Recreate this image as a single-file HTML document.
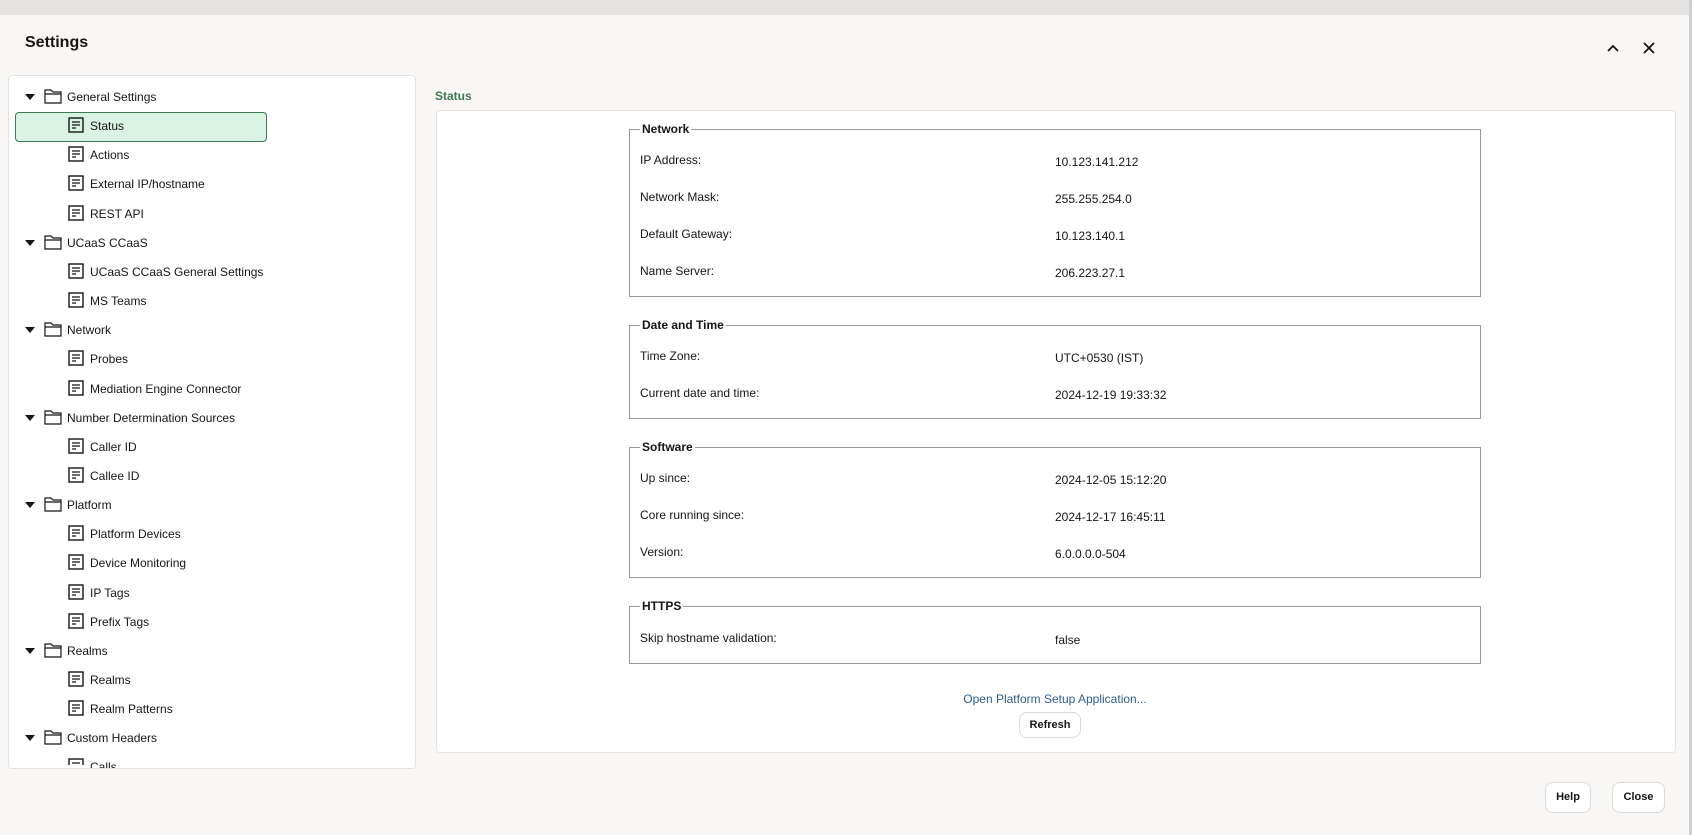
<!DOCTYPE html>
<html><head><meta charset="utf-8"><style>
*{margin:0;padding:0;box-sizing:border-box}
body{width:1692px;height:835px;overflow:hidden;background:#f8f7f5;font-family:"Liberation Sans",sans-serif;color:#161513;position:relative}
.top{position:absolute;left:0;top:0;width:1692px;height:15px;background:#e4e3e1}
.rs{position:absolute;left:1689px;top:0;width:3px;height:835px;background:#cfcfcf}
.title{position:absolute;left:25px;top:34px;font-size:16px;font-weight:bold}
.left{position:absolute;left:8px;top:75px;width:408px;height:694px;background:#fff;border:1px solid #e4e2df;border-radius:4px;overflow:hidden}
.row{position:absolute;font-size:12px;height:20px;line-height:20px;white-space:nowrap}
.sel{position:absolute;left:6px;top:36px;width:252px;height:30px;background:#d9f4e5;border:1px solid #3b7a52;border-radius:4px}
.caret{position:absolute;width:0;height:0;border-left:5px solid transparent;border-right:5px solid transparent;border-top:6px solid #161513}
svg{position:absolute}
.stat{position:absolute;left:435px;top:89px;font-size:12px;font-weight:bold;color:#3b7a52}
.box{position:absolute;left:436px;top:110px;width:1240px;height:643px;background:#fff;border:1px solid #e4e2df;border-radius:4px}
fieldset{position:absolute;left:629px;width:852px;border:1px solid #9a9a9a;font-size:12px}
legend{font-weight:bold;font-size:12px;margin-left:10px;padding:0 2px}
.l{position:absolute;left:640px;font-size:12px}
.v{position:absolute;left:1055px;font-size:12px}
.btn{position:absolute;background:#fff;border:1px solid #dcdad6;border-radius:8px;font-size:11px;font-weight:bold;text-align:center}
</style></head><body>
<div class="top"></div><div class="rs"></div>
<div class="title">Settings</div>
<svg style="left:1606px;top:42px" width="14" height="12" viewBox="0 0 14 12"><path d="M2 9 L7 4 L12 9" fill="none" stroke="#161513" stroke-width="1.8"/></svg>
<svg style="left:1642px;top:41px" width="14" height="14" viewBox="0 0 14 14"><path d="M2 2L12 12M12 2L2 12" stroke="#161513" stroke-width="1.8"/></svg>
<div class="left">
<div class="sel"></div>
</div>
<div id="tree"></div>
<div class="stat">Status</div>
<div class="box"></div>
<fieldset style="top:122px;height:175px"><legend>Network</legend></fieldset>
<div class="l" style="top:153px">IP Address:</div><div class="v" style="top:155px">10.123.141.212</div>
<div class="l" style="top:190px">Network Mask:</div><div class="v" style="top:192px">255.255.254.0</div>
<div class="l" style="top:227px">Default Gateway:</div><div class="v" style="top:229px">10.123.140.1</div>
<div class="l" style="top:264px">Name Server:</div><div class="v" style="top:266px">206.223.27.1</div>
<fieldset style="top:318px;height:101px"><legend>Date and Time</legend></fieldset>
<div class="l" style="top:349px">Time Zone:</div><div class="v" style="top:351px">UTC+0530 (IST)</div>
<div class="l" style="top:386px">Current date and time:</div><div class="v" style="top:388px">2024-12-19 19:33:32</div>
<fieldset style="top:440px;height:138px"><legend>Software</legend></fieldset>
<div class="l" style="top:471px">Up since:</div><div class="v" style="top:473px">2024-12-05 15:12:20</div>
<div class="l" style="top:508px">Core running since:</div><div class="v" style="top:510px">2024-12-17 16:45:11</div>
<div class="l" style="top:545px">Version:</div><div class="v" style="top:547px">6.0.0.0.0-504</div>
<fieldset style="top:599px;height:65px"><legend>HTTPS</legend></fieldset>
<div class="l" style="top:631px">Skip hostname validation:</div><div class="v" style="top:633px">false</div>
<div style="position:absolute;left:900px;width:310px;text-align:center;top:692px;font-size:12px;color:#2f5f8a">Open Platform Setup Application...</div>
<div class="btn" style="left:1019px;top:712px;width:62px;height:26px;line-height:24px">Refresh</div>
<div class="btn" style="left:1545px;top:782px;width:46px;height:31px;line-height:29px">Help</div>
<div class="btn" style="left:1612px;top:782px;width:53px;height:31px;line-height:29px">Close</div>
<script>
var items=[[0,"General Settings"],[1,"Status"],[1,"Actions"],[1,"External IP/hostname"],[1,"REST API"],[0,"UCaaS CCaaS"],[1,"UCaaS CCaaS General Settings"],[1,"MS Teams"],[0,"Network"],[1,"Probes"],[1,"Mediation Engine Connector"],[0,"Number Determination Sources"],[1,"Caller ID"],[1,"Callee ID"],[0,"Platform"],[1,"Platform Devices"],[1,"Device Monitoring"],[1,"IP Tags"],[1,"Prefix Tags"],[0,"Realms"],[1,"Realms"],[1,"Realm Patterns"],[0,"Custom Headers"],[1,"Calls"]];
var h="";
items.forEach(function(it,i){
var y=Math.round(97+i*29.15);var clip=y>755?"clip-path:inset(0 0 "+(y+10-768)+"px 0);":"";
if(it[0]==0){
h+='<div class="caret" style="left:25px;top:'+(y-3)+'px"></div>';
h+='<svg style="left:44px;top:'+(y-9)+'px" width="18" height="16" viewBox="0 0 18 16"><path d="M1 2H7L9 4H17V15H1Z M1 6H17" fill="none" stroke="#161513" stroke-width="1.2"/></svg>';
h+='<div class="row" style="left:67px;top:'+(y-10)+'px">'+it[1]+'</div>';
}else{
h+='<svg style="left:68px;top:'+(y-9)+'px;'+clip+'" width="16" height="16" viewBox="0 0 16 16"><rect x="1" y="1" width="14" height="14" fill="none" stroke="#161513" stroke-width="1.4"/><path d="M4 5H12M4 8H12M4 11H8" stroke="#161513" stroke-width="1.3"/></svg>';
h+='<div class="row" style="left:90px;top:'+(y-10)+'px;'+clip+'">'+it[1]+'</div>';
}});
document.getElementById("tree").innerHTML=h;
</script>
</body></html>
